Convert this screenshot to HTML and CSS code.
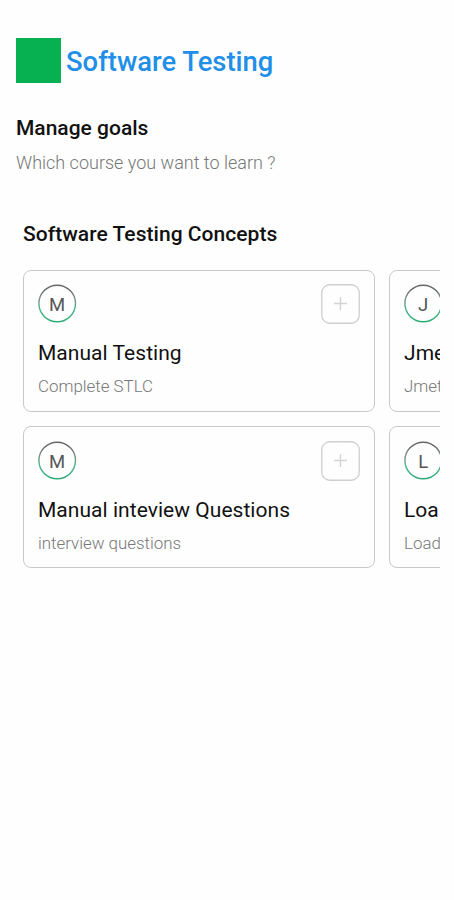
FILE: index.html
```html
<!DOCTYPE html>
<html lang="en">
<head>
<meta charset="utf-8">
<title>Software Testing</title>
<link rel="stylesheet" href="styles.css">
</head>
<body>
<header class="brand">
  <div class="logo"></div>
  <h1 class="brand-name">Software Testing</h1>
</header>
<section class="intro">
  <h2 class="intro-title">Manage goals</h2>
  <p class="intro-text">Which course you want to learn ?</p>
</section>
<main class="concepts">
  <h2 class="concepts-title">Software Testing Concepts</h2>
  <div class="grid">
    <article class="card">
      <div class="card-top">
        <svg class="avatar" viewBox="0 0 39 39"><defs><linearGradient id="ring" x1="0" y1="0" x2="0" y2="1"><stop offset="0.1" stop-color="#666"/><stop offset="0.35" stop-color="#7c8c85"/><stop offset="0.65" stop-color="#48b585"/><stop offset="1" stop-color="#2bae75"/></linearGradient></defs><circle cx="19.2" cy="19.5" r="18.3" fill="none" stroke="url(#ring)" stroke-width="1.4"/><text class="initial" x="19.2" y="27.4">M</text></svg>
        <svg class="add" viewBox="0 0 39 40"><rect x="0.75" y="0.75" width="37.5" height="38.5" rx="8"/><path d="M13 19.5h13M19.5 13v13"/></svg>
      </div>
      <h3 class="card-title">Manual Testing</h3>
      <p class="card-text">Complete STLC</p>
    </article>
    <article class="card">
      <div class="card-top">
        <svg class="avatar" viewBox="0 0 39 39"><circle cx="19.2" cy="19.5" r="18.3" fill="none" stroke="url(#ring)" stroke-width="1.4"/><text class="initial" x="19.2" y="27.4">J</text></svg>
      </div>
      <h3 class="card-title">Jme</h3>
      <p class="card-text">Jmet</p>
    </article>
    <article class="card card-lower">
      <div class="card-top">
        <svg class="avatar" viewBox="0 0 39 39"><circle cx="19.2" cy="19.5" r="18.3" fill="none" stroke="url(#ring)" stroke-width="1.4"/><text class="initial" x="19.2" y="27.4">M</text></svg>
        <svg class="add" viewBox="0 0 39 40"><rect x="0.75" y="0.75" width="37.5" height="38.5" rx="8"/><path d="M13 19.5h13M19.5 13v13"/></svg>
      </div>
      <h3 class="card-title">Manual inteview Questions</h3>
      <p class="card-text">interview questions</p>
    </article>
    <article class="card card-lower">
      <div class="card-top">
        <svg class="avatar" viewBox="0 0 39 39"><circle cx="19.2" cy="19.5" r="18.3" fill="none" stroke="url(#ring)" stroke-width="1.4"/><text class="initial" x="19.2" y="27.4">L</text></svg>
      </div>
      <h3 class="card-title">Loa</h3>
      <p class="card-text">Load</p>
    </article>
  </div>
</main>
</body>
</html>
```

FILE: styles.css
```css
* { box-sizing: border-box; }
body {
  margin: 0;
  padding: 38px 14px 0 16px;
  min-height: 900px;
  background: #fefefe;
  font-family: Roboto, sans-serif;
  color: #111;
  overflow: hidden;
}
h1, h2, h3, p { margin: 0; white-space: nowrap; }
.brand { display: flex; align-items: center; gap: 5px; height: 45px; }
.logo { width: 45px; height: 45px; background: #07b152; }
.brand-name {
  height: 45px;
  line-height: 48px;
  font-size: 27.4px;
  font-weight: 500;
  color: #1f8fe8;
}
.intro { padding-top: 33px; }
.intro-title {
  height: 24px;
  line-height: 24px;
  font-size: 21px;
  font-weight: 500;
}
.intro-text {
  height: 22px;
  margin-top: 12px;
  line-height: 21px;
  font-size: 18px;
  font-weight: 300;
  color: #777;
}
.concepts { padding: 46px 0 0 7px; }
.concepts-title {
  height: 26px;
  line-height: 29px;
  font-size: 21px;
  font-weight: 500;
  letter-spacing: 0.04px;
}
.grid {
  display: grid;
  grid-template-columns: 352px 352px;
  grid-auto-rows: 142px;
  gap: 14.7px 14px;
  margin-top: 23.6px;
  overflow: hidden;
}
.card {
  padding: 13px 14.5px 13px 14px;
  border: 1px solid #c9c9c9;
  border-radius: 8px;
}
.card-lower { padding-top: 13.7px; }
.card-top { display: flex; justify-content: space-between; height: 40px; }
.avatar { width: 39px; height: 39px; }
.initial { font-size: 18.5px; text-anchor: middle; fill: #555; }
.add { width: 39px; height: 40px; }
.add rect { fill: none; stroke: #cfcfcf; stroke-width: 1.3; }
.add path { fill: none; stroke: #d4d4d4; stroke-width: 1.4; }
.card-title {
  height: 26px;
  margin-top: 16px;
  line-height: 26px;
  font-size: 21px;
  font-weight: 400;
  letter-spacing: 0.04px;
}
.card-text {
  height: 22px;
  margin-top: 9px;
  line-height: 22px;
  font-size: 16.9px;
  font-weight: 300;
  color: #777;
}
```
